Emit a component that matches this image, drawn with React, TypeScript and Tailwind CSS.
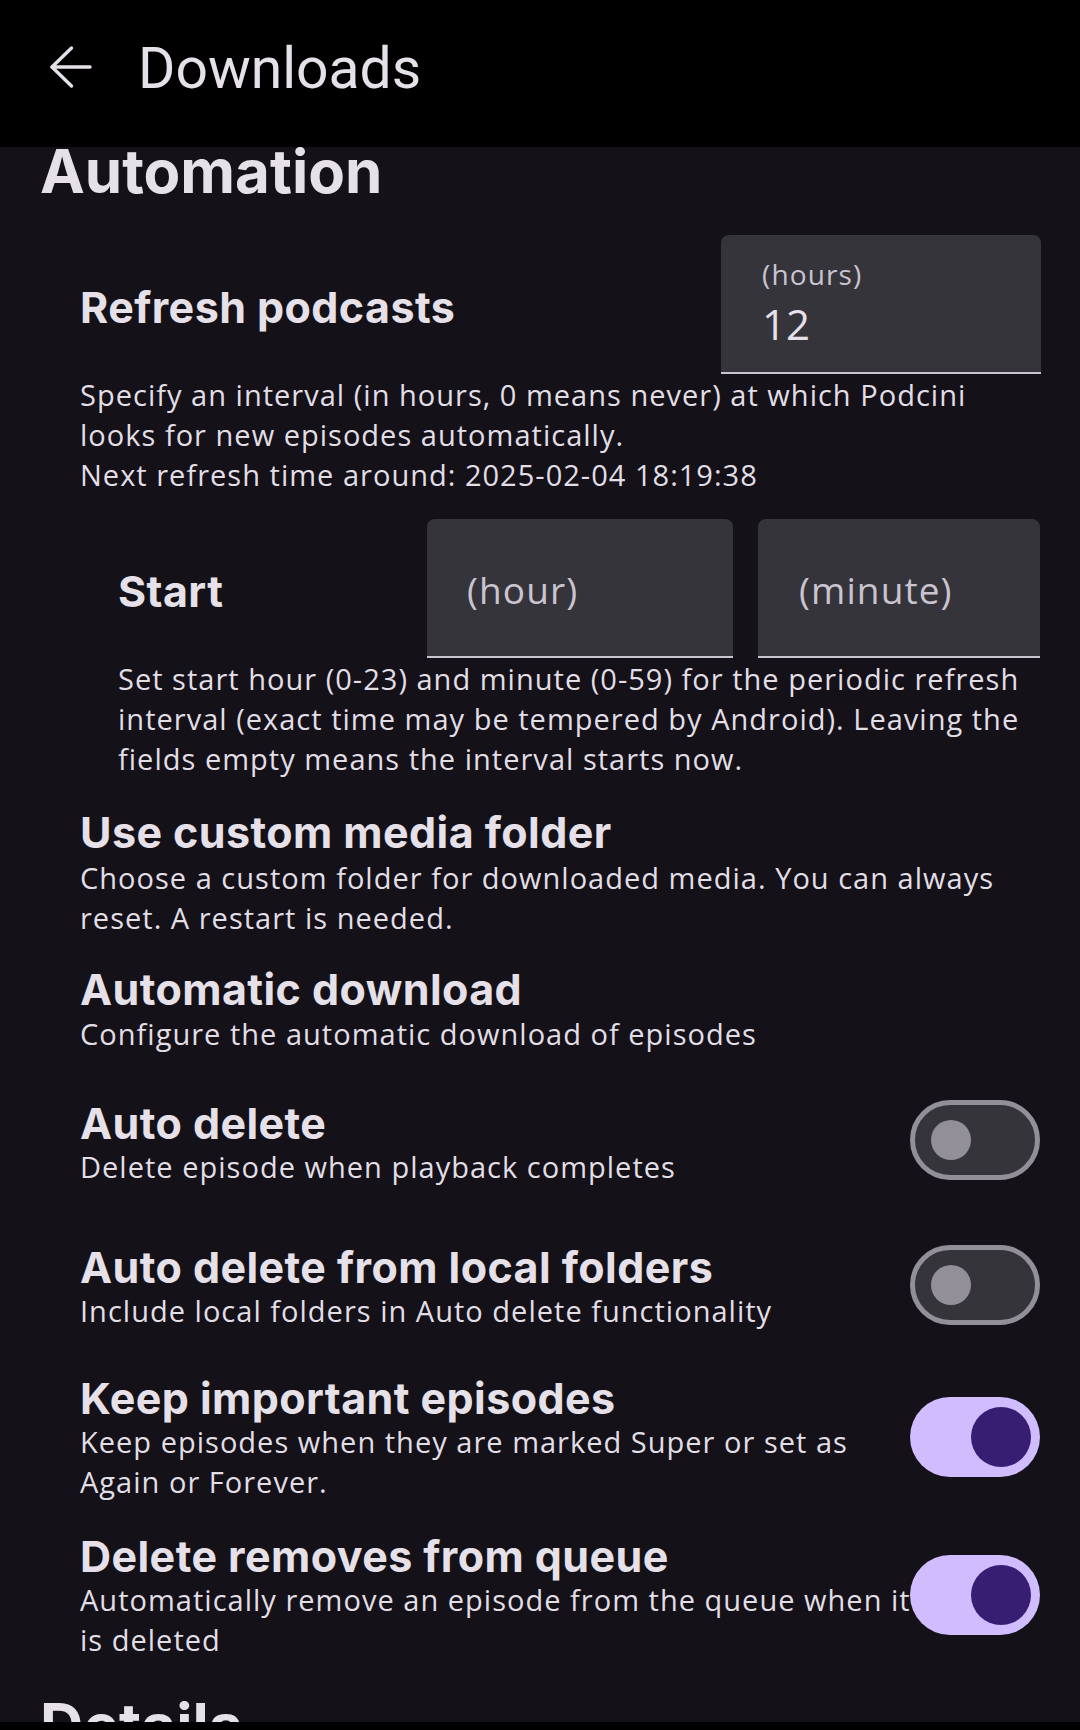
import React from "react";

const H = "font-['Inter',sans-serif] font-bold text-[43px] leading-[48px] tracking-[0.01em] text-[#e6e0e9] whitespace-nowrap";
const D = "font-['Open_Sans',sans-serif] text-[29px] leading-[40px] tracking-[0.035em] text-[#e2dee6] whitespace-nowrap";

function Toggle({ on }: { on: boolean }) {
  if (on) {
    return (
      <div className="w-[130px] h-[80px] shrink-0 rounded-full bg-[#d0bcff] flex items-center justify-end pr-[9px]">
        <div className="w-[60px] h-[60px] rounded-full bg-[#381e72]" />
      </div>
    );
  }
  return (
    <div className="w-[130px] h-[80px] shrink-0 rounded-full border-[5px] border-[#938f99] bg-[#36343b] flex items-center pl-[16px]">
      <div className="w-[40px] h-[40px] rounded-full bg-[#938f99]" />
    </div>
  );
}

function ToggleRow({
  title,
  lines,
  on,
  mt,
  tmt,
}: {
  title: string;
  lines: string[];
  on: boolean;
  mt: string;
  tmt: string;
}) {
  return (
    <div className={`flex items-start pl-[80px] pr-[40px] ${mt}`}>
      <div className="flex-1 min-w-0">
        <div className={H}>{title}</div>
        <div className={D}>
          {lines.map((l, i) => (
            <div key={i}>{l}</div>
          ))}
        </div>
      </div>
      <div className={`relative shrink-0 ${tmt}`}>
        <Toggle on={on} />
      </div>
    </div>
  );
}

export default function App() {
  return (
    <div className="w-[1080px] h-[1730px] flex flex-col bg-[#141218] overflow-hidden">
      <header className="h-[147px] shrink-0 bg-black">
        <div className="h-[134px] flex items-center">
          <svg
            className="ml-[46px] w-[48px] h-[48px] shrink-0"
            viewBox="0 0 48 48"
            fill="none"
            stroke="#e6e0e9"
            strokeWidth="3.4"
            strokeLinecap="round"
            strokeLinejoin="round"
          >
            <path d="M44 24H6" />
            <path d="M25.5 5L6 24L25.5 43" />
          </svg>
          <span className="ml-[44px] pt-[4px] font-['Roboto',sans-serif] text-[57px] leading-[56px] text-[#e6e0e9]">
            Downloads
          </span>
        </div>
      </header>

      <main className="flex-1 overflow-hidden">
        <div className="-mt-[6px] pl-[40px] font-['Inter',sans-serif] font-bold text-[60px] leading-[60px] text-[#e6e0e9]">
          Automation
        </div>

        <div className="mt-[34px] flex items-center pl-[80px] pr-[39px]">
          <div className={`${H} flex-1 pt-[5px]`}>Refresh podcasts</div>
          <div className="w-[320px] h-[139px] shrink-0 bg-[#36343b] rounded-t-[8px] border-b-2 border-[#cac4d0] pl-[41px] pt-[23px]">
            <div className="font-['Open_Sans',sans-serif] text-[28px] leading-[32px] tracking-[0.04em] text-[#cac4d0]">
              (hours)
            </div>
            <div className="mt-[10px] font-['Open_Sans',sans-serif] text-[42px] leading-[48px] text-[#e6e0e9]">
              12
            </div>
          </div>
        </div>

        <div className={`${D} mt-[1px] pl-[80px]`}>
          <div>Specify an interval (in hours, 0 means never) at which Podcini</div>
          <div>looks for new episodes automatically.</div>
          <div>Next refresh time around: 2025-02-04 18:19:38</div>
        </div>

        <div className="mt-[24px] flex items-center pl-[118px] pr-[40px]">
          <div className={`${H} flex-1 pt-[5px]`}>Start</div>
          <div className="w-[306px] h-[139px] shrink-0 bg-[#36343b] rounded-t-[8px] border-b-2 border-[#cac4d0] pl-[40px] pt-[49px]">
            <div className="font-['Open_Sans',sans-serif] text-[37px] leading-[44px] tracking-[0.03em] text-[#cac4d0]">(hour)</div>
          </div>
          <div className="ml-[25px] w-[282px] h-[139px] shrink-0 bg-[#36343b] rounded-t-[8px] border-b-2 border-[#cac4d0] pl-[41px] pt-[49px]">
            <div className="font-['Open_Sans',sans-serif] text-[37px] leading-[44px] tracking-[0.03em] text-[#cac4d0]">(minute)</div>
          </div>
        </div>

        <div className={`${D} mt-[1px] pl-[118px]`}>
          <div>Set start hour (0-23) and minute (0-59) for the periodic refresh</div>
          <div>interval (exact time may be tempered by Android). Leaving the</div>
          <div>fields empty means the interval starts now.</div>
        </div>

        <div className="mt-[29px] pl-[80px]">
          <div className={H}>Use custom media folder</div>
          <div className={`${D} mt-[2px]`}>
            <div>Choose a custom folder for downloaded media. You can always</div>
            <div>reset. A restart is needed.</div>
          </div>
        </div>

        <div className="mt-[27px] pl-[80px]">
          <div className={H}>Automatic download</div>
          <div className={`${D} mt-[1px]`}>Configure the automatic download of episodes</div>
        </div>

        <ToggleRow
          title="Auto delete"
          lines={["Delete episode when playback completes"]}
          on={false}
          mt="mt-[45px]"
          tmt="mt-[1px]"
        />
        <ToggleRow
          title="Auto delete from local folders"
          lines={["Include local folders in Auto delete functionality"]}
          on={false}
          mt="mt-[56px]"
          tmt="mt-[2px]"
        />
        <ToggleRow
          title="Keep important episodes"
          lines={["Keep episodes when they are marked Super or set as", "Again or Forever."]}
          on={true}
          mt="mt-[43px]"
          tmt="mt-[23px]"
        />
        <ToggleRow
          title="Delete removes from queue"
          lines={["Automatically remove an episode from the queue when it", "is deleted"]}
          on={true}
          mt="mt-[30px]"
          tmt="mt-[23px]"
        />

        <div className="mt-[35px] pl-[40px] font-['Inter',sans-serif] font-bold text-[60px] leading-[60px] text-[#e6e0e9]">
          Details
        </div>
      </main>
      <div className="h-[8px] shrink-0 bg-black" />
    </div>
  );
}
